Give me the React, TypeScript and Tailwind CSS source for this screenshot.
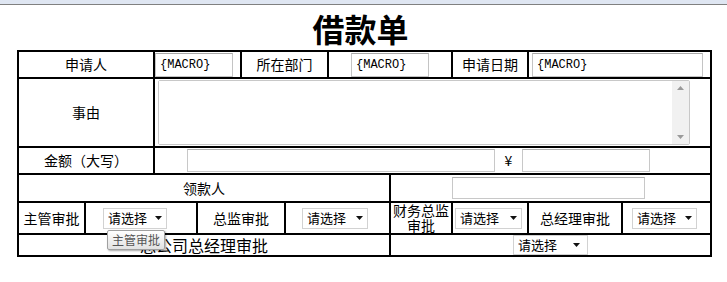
import React from 'react'

function MacroInput({ w }: { w: string }) {
  return (
    <div className={`${w} h-[24px] flex items-center border border-[#c4c4c4] border-t-[#a8a8a8] bg-white pl-[4px] font-['Liberation_Mono',monospace] text-[12px] text-black`}>
      {'{MACRO}'}
    </div>
  )
}

function Blank({ w, h }: { w: string; h: string }) {
  return <div className={`${w} ${h} border border-[#c8c8c8] border-t-[#b0b0b0] bg-white`} />
}

function Picker({ w, h = 'h-[21px]', pr = 'pr-[4px]' }: { w: string; h?: string; pr?: string }) {
  return (
    <div className={`${w} ${h} flex items-center justify-between pl-[4px] ${pr} border border-[#d2d2d2] bg-white text-[13px] text-black`}>
      <span>请选择</span>
      <svg width="7" height="4" viewBox="0 0 7 4">
        <path d="M0 0h7L3.5 4z" fill="#111" />
      </svg>
    </div>
  )
}

export default function App() {
  const cell = 'border-r-2 border-black flex items-center justify-center shrink-0'

  return (
    <div className="relative w-[727px] h-[282px] bg-white overflow-hidden font-['Noto_Sans_CJK_SC',sans-serif] text-[14px] text-black">
      {/* browser chrome remnant */}
      <div className="h-[5px] bg-[#dfe6f2] border-b border-[#808080]" />

      <div className="h-[45px] flex items-center justify-center pr-[6px] text-[32px] font-bold leading-none">
        借款单
      </div>

      <div className="ml-[17px] w-[695px] border-2 border-black">
        {/* row 1 */}
        <div className="flex h-[27px] border-b-2 border-black">
          <div className={`${cell} w-[136px]`}>申请人</div>
          <div className={`${cell} w-[87px] justify-start`}>
            <MacroInput w="w-[78px]" />
          </div>
          <div className={`${cell} w-[87px]`}>所在部门</div>
          <div className={`${cell} w-[124px]`}>
            <MacroInput w="w-[78px]" />
          </div>
          <div className={`${cell} w-[76px]`}>申请日期</div>
          <div className="flex-1 flex items-center pl-[3px]">
            <MacroInput w="w-[171px]" />
          </div>
        </div>

        {/* row 2 */}
        <div className="flex h-[69px] border-b-2 border-black">
          <div className={`${cell} w-[136px]`}>事由</div>
          <div className="flex-1 flex items-center pl-[3px]">
            <div className="w-[532px] h-[65px] flex border border-[#c8c8c8] rounded-[2px] bg-white">
              <textarea className="flex-1 resize-none outline-none bg-white" />
              <div className="w-[17px] bg-[#f1f1f1] flex flex-col items-center justify-between py-[5px]">
                <svg width="7" height="4" viewBox="0 0 7 4">
                  <path d="M3.5 0L7 4H0z" fill="#9a9a9a" />
                </svg>
                <svg width="7" height="4" viewBox="0 0 7 4">
                  <path d="M0 0h7L3.5 4z" fill="#9a9a9a" />
                </svg>
              </div>
            </div>
          </div>
        </div>

        {/* row 3 */}
        <div className="flex h-[27px] border-b-2 border-black">
          <div className={`${cell} w-[136px]`}>金额（大写）</div>
          <div className="flex-1 flex items-center pl-[32px]">
            <Blank w="w-[308px]" h="h-[23px]" />
            <div className="w-[27px] text-center">¥</div>
            <Blank w="w-[128px]" h="h-[23px]" />
          </div>
        </div>

        {/* row 4 */}
        <div className="flex h-[28px] border-b-2 border-black">
          <div className={`${cell} w-[372px]`}>领款人</div>
          <div className="flex-1 flex items-center pl-[61px]">
            <Blank w="w-[193px]" h="h-[22px]" />
          </div>
        </div>

        {/* row 5 */}
        <div className="flex h-[32px] border-b-2 border-black">
          <div className={`${cell} w-[67px]`}>主管审批</div>
          <div className={`${cell} w-[112px] justify-start pl-[17px]`}>
            <Picker w="w-[64px]" />
          </div>
          <div className={`${cell} w-[88px]`}>总监审批</div>
          <div className={`${cell} w-[105px] justify-start pl-[16px]`}>
            <Picker w="w-[66px]" />
          </div>
          <div className={`${cell} w-[62px]`}>
            <p className="w-[58px] leading-[15px] text-center">财务总监审批</p>
          </div>
          <div className={`${cell} w-[76px] justify-start pl-[2px]`}>
            <Picker w="w-[67px]" />
          </div>
          <div className={`${cell} w-[94px]`}>总经理审批</div>
          <div className="flex-1 flex items-center pl-[9px]">
            <Picker w="w-[65px]" />
          </div>
        </div>

        {/* row 6 */}
        <div className="flex h-[20px]">
          <div className={`${cell} w-[372px] text-[16px]`}>总公司总经理审批</div>
          <div className="flex-1 flex items-center justify-center">
            <Picker w="w-[75px]" h="h-[20px]" pr="pr-[7px]" />
          </div>
        </div>
      </div>

      {/* tooltip */}
      <div className="absolute left-[107px] top-[230px] w-[58px] h-[20px] flex items-center justify-center border border-[#a0a0a0] rounded-[2px] bg-gradient-to-b from-white to-[#e2e2e2] shadow-[1px_1px_2px_rgba(0,0,0,0.35)] text-[12px] text-[#555]">
        主管审批
      </div>
    </div>
  )
}
